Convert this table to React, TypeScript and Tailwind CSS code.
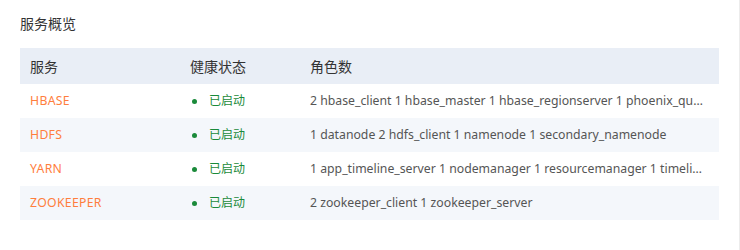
const services = [
  { name: 'HBASE', roles: '2 hbase_client 1 hbase_master 1 hbase_regionserver 1 phoenix_query_server' },
  { name: 'HDFS', roles: '1 datanode 2 hdfs_client 1 namenode 1 secondary_namenode' },
  { name: 'YARN', roles: '1 app_timeline_server 1 nodemanager 1 resourcemanager 1 timeline_reader' },
  { name: 'ZOOKEEPER', roles: '2 zookeeper_client 1 zookeeper_server' },
]

export default function App() {
  return (
    <div
      className="w-[740px] h-[250px] bg-white border-r border-[#ececec] overflow-hidden"
      style={{ fontFamily: '"Noto Sans", "Noto Sans CJK SC", sans-serif' }}
    >
      <div className="pl-5 pr-5">
        <h2 className="pt-[14px] h-[48px] text-[14px] leading-[20px] text-[#333]">服务概览</h2>
        <table className="w-[699px] table-fixed border-collapse">
          <colgroup>
            <col className="w-[160px]" />
            <col className="w-[120px]" />
            <col />
          </colgroup>
          <thead>
            <tr className="h-[36px] bg-[#e9eef6] text-[14px] text-[#333] text-left">
              <th className="font-normal px-[10px]">服务</th>
              <th className="font-normal px-[10px]">健康状态</th>
              <th className="font-normal px-[10px]">角色数</th>
            </tr>
          </thead>
          <tbody>
            {services.map((s, i) => (
              <tr key={s.name} className={`h-[34px] text-[12.25px] ${i % 2 === 1 ? 'bg-[#f4f7fb]' : 'bg-white'}`}>
                <td className="px-[10px] text-[#ff7e3d] tracking-[0.3px]">{s.name}</td>
                <td className="px-[10px]">
                  <span className="flex items-center text-[12px] text-[#1a8a3a]">
                    <span className="w-[5px] h-[5px] rounded-full bg-[#1a8a3a] ml-[2px] mr-[12px]" />
                    已启动
                  </span>
                </td>
                <td className="px-[10px] text-[#555] truncate">{s.roles}</td>
              </tr>
            ))}
          </tbody>
        </table>
      </div>
    </div>
  )
}
